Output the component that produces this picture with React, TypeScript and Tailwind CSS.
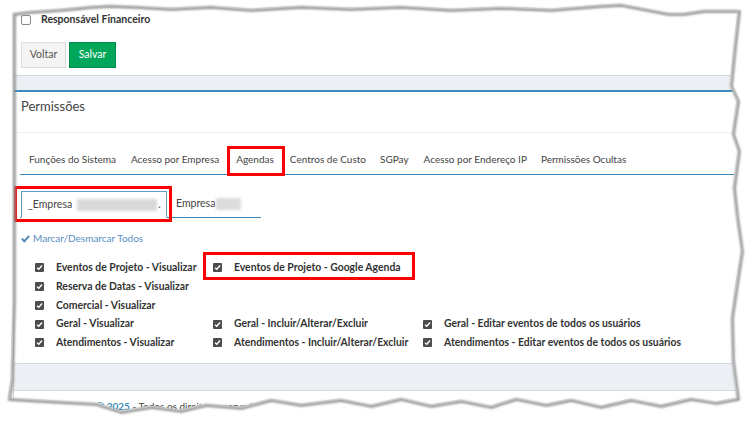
import React from 'react'

const tabs = [
  { label: 'Funções do Sistema', cls: 'mr-[15px]' },
  { label: 'Acesso por Empresa', cls: 'mr-[17px]' },
  { label: 'Agendas', cls: 'mr-[16px]' },
  { label: 'Centros de Custo', cls: 'mr-[14px]' },
  { label: 'SGPay', cls: 'mr-[15px]' },
  { label: 'Acesso por Endereço IP', cls: 'mr-[14px]' },
  { label: 'Permissões Ocultas', cls: '' },
]

const rows: (string | null)[][] = [
  ['Eventos de Projeto - Visualizar', 'Eventos de Projeto - Google Agenda', null],
  ['Reserva de Datas - Visualizar', null, null],
  ['Comercial - Visualizar', null, null],
  ['Geral - Visualizar', 'Geral - Incluir/Alterar/Excluir', 'Geral - Editar eventos de todos os usuários'],
  ['Atendimentos - Visualizar', 'Atendimentos - Incluir/Alterar/Excluir', 'Atendimentos - Editar eventos de todos os usuários'],
]

function CheckBox({ checked }: { checked: boolean }) {
  if (!checked) {
    return <span className="block w-[10px] h-[10px] border border-[#8a8a8a] rounded-[2px] bg-white shrink-0" />
  }
  return (
    <span className="flex w-[9px] h-[9px] rounded-[1px] bg-[#4d4d4d] items-center justify-center shrink-0">
      <svg width="7" height="7" viewBox="0 0 10 10">
        <path d="M1.5 5.2 L4 7.6 L8.6 2.2" fill="none" stroke="#fff" strokeWidth="2" />
      </svg>
    </span>
  )
}

const top = 'M13 13 L30 11 L60 9 L90 6 L108 5 L135 6 L170 8 L210 6 L250 9 L300 6 L350 8 L400 6 L450 9 L500 7 L550 9 L600 5 L620 4 L667 13 L683 13 L703 10 L738 10'
const right = 'L734 45 L730 85 L737 100 L732 133 L738 150 L733 187 L736 215 L741 250 L736 283 L731 317 L732 360 L737 398'
const bottom = 'L715 402 L690 398 L660 405 L630 399 L600 406 L570 399 L545 404 L515 398 L490 406 L460 400 L430 405 L400 398 L370 405 L340 399 L300 404 L270 399 L240 407 L205 404 L180 410 L150 406 L120 411 L95 403 L40 400 L8 398'
const left = 'L11 380 L13 300 L13 13 Z'
const paperPath = `${top} ${right} ${bottom} ${left}`

export default function App() {
  return (
    <div className="relative w-[749px] h-[421px] overflow-hidden bg-white font-['Lato',sans-serif] text-[#333]">
      <div className="ml-[13px] w-[726px] border-l border-[#d6d6d6]">
        {/* form footer */}
        <div className="h-[76px] pl-[7px] pt-[15px] border-b border-[#d2d6de]">
          <div className="flex items-center h-[10px]">
            <CheckBox checked={false} />
            <span className="ml-[10px] text-[10.5px] font-bold text-[#333]">Responsável Financeiro</span>
          </div>
          <div className="flex mt-[17px] gap-[3px]">
            <button className="h-[26px] w-[45px] bg-[#f4f4f4] border border-[#dcdcdc] text-[10.5px] text-[#555]">Voltar</button>
            <button className="h-[26px] w-[47px] bg-[#00a65a] border border-[#008d4c] text-[10.5px] text-white">Salvar</button>
          </div>
        </div>
        <div className="h-[14px] bg-[#ecf0f5]" />

        {/* permissions box */}
        <div className="border-t-2 border-[#3c8dbc] bg-white border-b border-b-[#d2d6de]">
          <div className="h-[41px] pl-[7px] pt-[6px] border-b border-[#f0f0f0] text-[13px] leading-[16px] text-[#444]">
            Permissões
          </div>
          <div className="pl-[6px] pr-[3px] pt-[16px] pb-[16px]">
            <div className="flex border-b border-[#3c8dbc] h-[26px] pt-[4px] pl-[9px] text-[10px] leading-[13px] text-[#444]">
              {tabs.map(t => (
                <span key={t.label} className={t.cls}>{t.label}</span>
              ))}
            </div>

            <div className="flex mt-[16px] pl-[1px] w-[241px] border-b border-[#3c8dbc] h-[27px]">
              <div className="w-[146px] h-[27px] bg-white border border-[#5f9cc6] border-b-white -mb-[1px] flex items-center pl-[6px] text-[10.5px] text-[#444]">
                <span>_Empresa</span>
                <span className="ml-[5px] w-[80px] h-[12px] bg-[#d9d9d9] blur-[1.5px]" />
                <span className="ml-[1px]">.</span>
              </div>
              <div className="flex items-center pl-[9px] text-[10.5px] text-[#444]">
                <span>Empresa</span>
                <span className="ml-[1px] w-[25px] h-[12px] bg-[#dcdcdc] blur-[1.5px]" />
              </div>
            </div>

            <div className="flex items-center h-[12px] mt-[14px] ml-[1px] text-[10px] text-[#5a8fbf] gap-[3px]">
              <svg width="9" height="9" viewBox="0 0 10 10">
                <path d="M1 5.3 L3.8 8 L9 2" fill="none" stroke="#4f86b8" strokeWidth="2.2" />
              </svg>
              <span>Marcar/Desmarcar Todos</span>
            </div>

            <div className="mt-[16px] pl-[15px] flex flex-col gap-[6.75px]">
              {rows.map((r, i) => (
                <div key={i} className="grid grid-cols-[178px_210px_1fr] h-[12px] items-center">
                  {r.map((label, j) => (
                    <div key={j} className="flex items-center">
                      {label && (
                        <>
                          <CheckBox checked />
                          <span className="ml-[12px] text-[10.4px] font-bold text-[#333] whitespace-nowrap">{label}</span>
                        </>
                      )}
                    </div>
                  ))}
                </div>
              ))}
            </div>
          </div>
        </div>
        <div className="h-[27px] bg-[#ecf0f5] border-b border-[#d2d6de]" />
        <div className="pt-[8px] pl-[82px] text-[10px] text-[#444]">
          <span className="text-[#3c8dbc] font-bold">© 2025</span> - Todos os direitos reservados.
        </div>
      </div>

      {/* highlight annotations */}
      <div className="absolute left-[227px] top-[146px] w-[58px] h-[30px] border-[3px] border-[#f00]" />
      <div className="absolute left-[14px] top-[186px] w-[158px] h-[36px] border-[3px] border-[#f00]" />
      <div className="absolute left-[203px] top-[252px] w-[212px] h-[28px] border-[3px] border-[#f00]" />

      {/* torn paper edge */}
      <svg className="absolute inset-0 pointer-events-none" width="749" height="421" viewBox="0 0 749 421">
        <defs>
          <filter id="sh" x="-5%" y="-5%" width="110%" height="110%">
            <feGaussianBlur stdDeviation="1.2" />
          </filter>
        </defs>
        <path d={`M0 0 H749 V421 H0 Z ${paperPath}`} fill="#fff" fillRule="evenodd" />
        <path d={paperPath} fill="none" stroke="#8c8c8c" strokeWidth="2.5" filter="url(#sh)" transform="translate(1.5 1.5)" />
        <path d={paperPath} fill="none" stroke="#c8c8c8" strokeWidth="0.8" />
      </svg>
    </div>
  )
}
